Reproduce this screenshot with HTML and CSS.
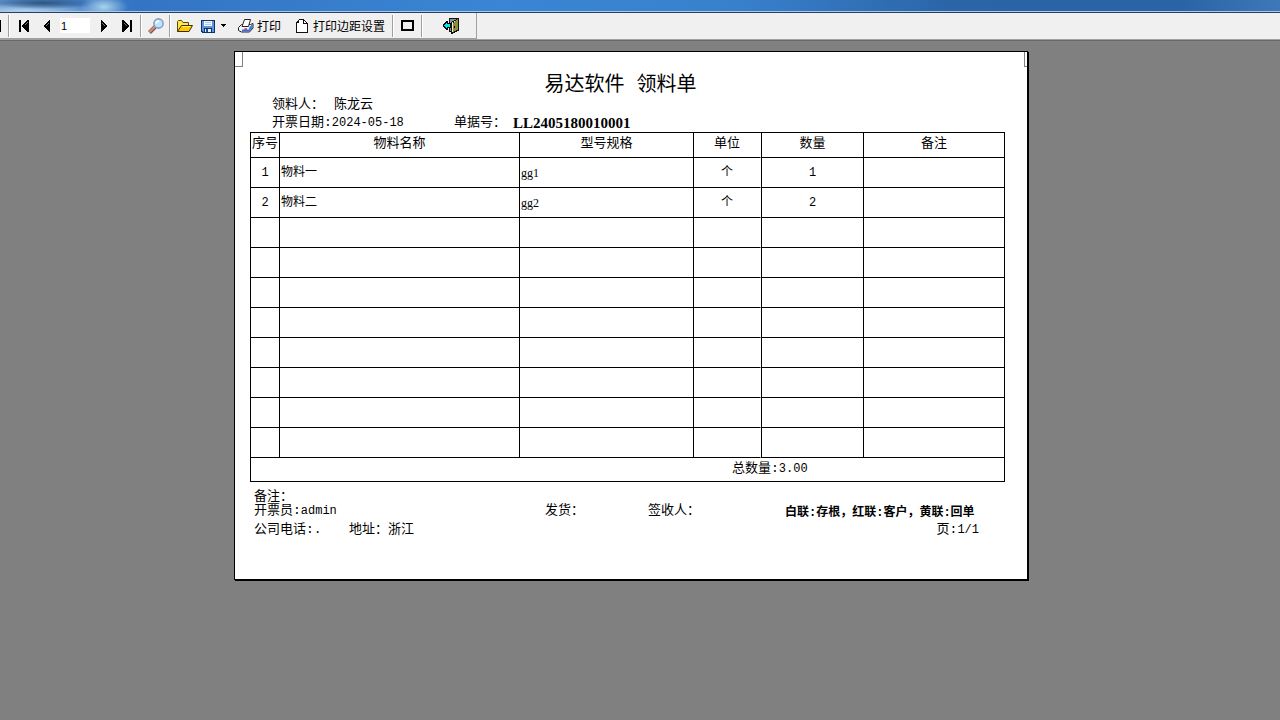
FILE: index.html
```html
<!DOCTYPE html>
<html lang="zh-CN">
<head>
  <meta charset="UTF-8" />
  <meta name="viewport" content="width=device-width, initial-scale=1.0"/>
  <title>领料单</title>
  <link rel="stylesheet" href="styles.css">
</head>
<body>

  <div class="titlebar"></div>

  <div class="toolbar">
    <div class="tools">
      <span class="stub"></span>
      <span class="sep first"></span>
      <button type="button" class="tool" aria-label="首页">
        <svg width="16" height="16" shape-rendering="crispEdges"><path d="M2 2h2v12H2zM12 2v12h-2v-1H9v-1H8v-1H7v-1H6V9H5V7h1V6h1V5h1V4h1V3h1V2z"/><path d="M9 5h1v1H9zM8 6h1v1H8zM10 4h1v1h-1z" fill="#4c78a0"/></svg>
      </button>
      <button type="button" class="tool" aria-label="上一页">
        <svg width="16" height="16" shape-rendering="crispEdges"><path d="M10 2v12H9v-1H8v-1H7v-1H6v-1H5V9H4V7h1V6h1V5h1V4h1V3h1V2z"/><path d="M8 5h1v1H8zM7 6h1v1H7zM6 7h1v1H6z" fill="#4c78a0"/></svg>
      </button>
      <input class="page-no" type="text" value="1" aria-label="页码" />
      <button type="button" class="tool" aria-label="下一页">
        <svg width="16" height="16" shape-rendering="crispEdges"><path d="M5 2h1v1h1v1h1v1h1v1h1v1h1v2h-1v1H9v1H8v1H7v1H6v1H5z"/><path d="M6 5h1v1H6zM7 6h1v1H7zM8 7h1v1H8z" fill="#4c78a0"/></svg>
      </button>
      <button type="button" class="tool" aria-label="末页">
        <svg width="16" height="16" shape-rendering="crispEdges"><path d="M11 2h2v12h-2zM3 2h2v1h1v1h1v1h1v1h1v1h1v2H9v1H8v1H7v1H6v1H5v1H3z"/><path d="M5 5h1v1H5zM6 6h1v1H6zM7 7h1v1H7z" fill="#4c78a0"/></svg>
      </button>
      <span class="sep"></span>
      <button type="button" class="tool" aria-label="缩放">
        <svg width="16" height="16"><path d="M1.500 14.500L7 9" stroke="#5a5a8c" stroke-width="4"/><path d="M1.500 14L7 8.500" stroke="#e88a50" stroke-width="2.400"/><circle cx="10.500" cy="5.500" r="4.600" fill="#bfe6f8" stroke="#8c9ccc" stroke-width="1.600"/><path d="M8 5.500Q8.500 3 11 3" stroke="#fff" stroke-width="1.600" fill="none"/></svg>
      </button>
      <span class="sep"></span>
      <button type="button" class="tool" aria-label="打开">
        <svg width="16" height="16"><path d="M.5 13.500v-10l1-1h3l1.500 2h5.500v3" fill="#ffe84a" stroke="#5c4800"/><path d="M.5 13.500L4.500 7.500h11l-3.500 6z" fill="#ffc800" stroke="#3c3000"/><path d="M5 8.500h8.500" stroke="#fff27a"/></svg>
      </button>
      <button type="button" class="tool" aria-label="保存">
        <svg width="16" height="16" shape-rendering="crispEdges"><path d="M1 2h14v13H2v-1H1z" fill="#10306c"/><path d="M2 3h12v11H3v-1H2z" fill="#5c94e0"/><path d="M4 3h8v5H4z" fill="#f4f8fd"/><path d="M5 4h6v1H5zM5 6h6v1H5z" fill="#b4c8e4"/><path d="M4 10h8v4H4z" fill="#10306c"/><path d="M5 11h6v3H5z" fill="#e8f0f8"/><path d="M6 11h2v3H6z" fill="#204c94"/></svg>
      </button>
      <button type="button" class="tool drop" aria-label="保存选项">
        <svg width="5" height="3" shape-rendering="crispEdges"><path d="M0 0h5v1H4v1H3v1H2V2H1V1H0z"/></svg>
      </button>
      <button type="button" class="tool text">
        <svg width="16" height="16"><path d="M.5 9.500L3.500 6.500h9l2.500-1v4.500l-3.500 4h-8l-3-1.500z" fill="#f3f6fb" stroke="#222"/><path d="M4 8.500L6.500 1.500h6L10.500 8.500z" fill="#fff" stroke="#222"/><path d="M11 13.500V9.500l3.500-3.500v4z" fill="#3c7ce0"/><path d="M4 12.500h7" stroke="#2f6ee0" stroke-width="2"/><path d="M6.500 11H9" stroke="#f02020" stroke-width="1.500"/></svg>
        打印
      </button>
      <button type="button" class="tool text">
        <svg width="16" height="16" shape-rendering="crispEdges"><path d="M5 1h5v1h1v1h1v1h1v1h1v10H2V4h1V3h1V2h1z" fill="#111"/><path d="M5 2h4v4h4v8H3V5h2z" fill="#fff"/><path d="M10 3v2h2V4h-1V3z" fill="#fff"/></svg>
        打印边距设置
      </button>
      <span class="sep last"></span>
      <button type="button" class="tool" aria-label="全屏">
        <svg width="16" height="16" shape-rendering="crispEdges"><path d="M1 2h13v11H1zM3 4v7h9V4z" fill-rule="evenodd"/></svg>
      </button>
      <span class="sep"></span>
      <button type="button" class="tool exit" aria-label="退出">
        <svg width="16" height="16" shape-rendering="crispEdges"><path d="M6 0h10v13h-2v1h-2v1h-2v1H8v-2H6z" fill="#111"/><path d="M7 1h6v1h-2v1H9v1H8v9H7z" fill="#909090"/><path d="M15 1v11h-2v1h-2v1h-1V5h1V4h1V3h1V2h1V1z" fill="#8c8c40"/><path d="M9 4h1v10H9zM11 3h1v1h-1z" fill="#f0f0d0"/><path d="M11 8h1v2h-1z"/><path d="M0 6h1V5h1V4h1V3h2v2h3v5H5v2H3v-1H2v-1H1V9H0z"/><path d="M1 7h1V6h1V5h1v1h3v3H4v1H3V9H2V8H1z" fill="#00e8f8"/></svg>
      </button>
    </div>
  </div>

  <div class="viewer">
    <div class="sheet">
      <span class="mark left"></span>
      <span class="mark right"></span>

      <h1>易达软件 领料单</h1>
      <div class="line">
        <span class="label-user">领料人：</span>
        <span>陈龙云</span>
      </div>
      <div class="line">
        <span class="date">开票日期:<span class="num">2024-05-18</span></span>
        <span class="label-no">单据号：</span>
        <strong>LL2405180010001</strong>
      </div>

      <table>
        <colgroup>
          <col class="c-seq"><col class="c-name"><col class="c-spec"><col class="c-unit"><col class="c-qty"><col class="c-memo">
        </colgroup>
        <thead>
          <tr><th>序号</th><th>物料名称</th><th>型号规格</th><th class="unit">单位</th><th>数量</th><th>备注</th></tr>
        </thead>
        <tbody>
          <tr><td>1</td><td class="l">物料一</td><td class="l spec">gg1</td><td class="unit">个</td><td>1</td><td></td></tr>
          <tr><td>2</td><td class="l">物料二</td><td class="l spec">gg2</td><td class="unit">个</td><td>2</td><td></td></tr>
          <tr><td></td><td></td><td></td><td class="unit"></td><td></td><td></td></tr>
          <tr><td></td><td></td><td></td><td class="unit"></td><td></td><td></td></tr>
          <tr><td></td><td></td><td></td><td class="unit"></td><td></td><td></td></tr>
          <tr><td></td><td></td><td></td><td class="unit"></td><td></td><td></td></tr>
          <tr><td></td><td></td><td></td><td class="unit"></td><td></td><td></td></tr>
          <tr><td></td><td></td><td></td><td class="unit"></td><td></td><td></td></tr>
          <tr><td></td><td></td><td></td><td class="unit"></td><td></td><td></td></tr>
          <tr><td></td><td></td><td></td><td class="unit"></td><td></td><td></td></tr>
        </tbody>
        <tfoot>
          <tr><td colspan="3"></td><td colspan="3" class="total">总数量:<span class="num">3.00</span></td></tr>
        </tfoot>
      </table>

      <div class="foot">
        <div class="row">备注：</div>
        <div class="row">
          <span class="maker">开票员:<span class="num">admin</span></span>
          <span class="sender">发货：</span>
          <span class="signer">签收人：</span>
          <b>白联:存根，红联:客户，黄联:回单</b>
        </div>
        <div class="row contact">
          <span class="phone">公司电话:.</span>
          <span>地址：浙江</span>
          <span class="page">页:<span class="num">1/1</span></span>
        </div>
      </div>
    </div>
  </div>

</body>
</html>
```
FILE: styles.css
```css
* {
  box-sizing: border-box;
}

body {
  margin: 0;
  min-height: 100vh;
  background: #808080;
  color: #000;
  font-family: "Liberation Mono", "Noto Sans CJK SC", monospace;
  font-size: 13px;
}

.titlebar {
  height: 13px;
  border-bottom: 1px solid #27405f;
  box-shadow: inset 0 -1px 0 #a9c8ea;
  background:
    radial-gradient(ellipse 50px 6px at 44px 3px, #2d5680, transparent),
    radial-gradient(ellipse 24px 12px at 104px 7px, #a9d2ec, transparent),
    radial-gradient(ellipse 80px 8px at 24px 11px, #b4d4ee, transparent),
    linear-gradient(90deg, #5a8cc4 0, #3474c4 140px, #3a86d4 500px, #3880cc 740px, #2b65a8 950px, #2a64a6 1180px, #3f78b8 100%);
}

/* barra */
.toolbar {
  height: 28px;
  background: #f0f0f0;
  border-bottom: 1px solid #696969;
  box-shadow: inset 0 -1px 0 #a0a0a0;
}

.tools {
  display: flex;
  align-items: center;
  width: max-content;
  height: 26px;
  border-right: 1px solid #a0a0a0;
  border-bottom: 1px solid #a0a0a0;
}

.stub {
  width: 1px;
  height: 12px;
  background: #000;
}

.sep {
  width: 2px;
  height: 22px;
  margin: 0 2px;
  border-left: 1px solid #a0a0a0;
  border-right: 1px solid #fff;
}

.sep.first {
  margin: 0 3px 0 7px;
}

.sep.last {
  margin-left: 4px;
}

.tool {
  display: flex;
  align-items: center;
  justify-content: center;
  width: 23px;
  height: 22px;
  padding: 0;
  border: none;
  background: none;
  color: #000;
  font-family: "Noto Sans CJK SC", sans-serif;
  font-size: 12px;
  line-height: 22px;
}

.tool svg {
  flex: none;
}

.tool.drop {
  width: 9px;
}

.tool.text {
  width: auto;
  margin-left: 7px;
  padding: 0 3px;
  gap: 3px;
}

.tool.exit {
  width: 51px;
}

.page-no {
  width: 30px;
  height: 15px;
  margin: 0 2px 0 1px;
  padding: 0 1px;
  border: none;
  background: #fff;
  font-family: "Liberation Sans", sans-serif;
  font-size: 11px;
}

/* folha */
.viewer {
  padding: 10px 18px 10px 0;
}

.sheet {
  position: relative;
  max-width: 794px;
  margin: auto;
  padding: 24px 22px 40px 15px;
  background: #fff;
  border: 1px solid #000;
  box-shadow: 1px 1px 0 #000;
}

.mark {
  position: absolute;
  top: 0;
  height: 15px;
  border-bottom: 1px solid #808080;
}

.mark.left {
  left: 0;
  width: 8px;
  border-right: 1px solid #808080;
}

.mark.right {
  right: 0;
  width: 3px;
  border-left: 1px solid #808080;
}

h1 {
  margin: 0;
  padding-right: 14px;
  font-size: 20px;
  font-weight: normal;
  line-height: 20px;
  text-align: center;
}

.line {
  display: flex;
  padding-left: 22px;
  line-height: 18px;
  height: 18px;
}

.num {
  font-size: 12px;
}

.label-user {
  width: 62px;
}

.date {
  width: 182px;
}

.label-no {
  width: 59px;
}

.line strong {
  font-family: "Liberation Serif", serif;
  font-size: 15px;
}

table {
  width: 100%;
  table-layout: fixed;
  border-spacing: 0;
  border-top: 1px solid #000;
  border-left: 1px solid #000;
}

.c-seq { width: 29px; }
.c-spec { width: 174px; }
.c-unit { width: 67px; }
.c-qty { width: 103px; }
.c-memo { width: 141px; }

th, td {
  height: 30px;
  padding: 0;
  border-right: 1px solid #000;
  border-bottom: 1px solid #000;
  font-size: 12px;
  line-height: 20px;
  text-align: center;
}

th {
  height: 25px;
  padding-bottom: 2px;
  font-size: 13px;
  font-weight: normal;
}

/* linha dupla entre unidade e quantidade */
.unit {
  border-right-color: #fff;
}

.unit + th,
.unit + td {
  border-left: 1px solid #000;
}

td.l {
  padding-left: 1px;
  text-align: left;
}

td.spec {
  font-family: "Liberation Serif", serif;
}

tfoot td {
  height: 24px;
  border-right: none;
}

tfoot .total {
  padding: 0 0 2px 38px;
  border-right: 1px solid #000;
  font-size: 13px;
  text-align: left;
}

.foot {
  padding: 8px 0 0 4px;
}

.row {
  display: flex;
  height: 14px;
  line-height: 14px;
}

.maker {
  width: 291px;
}

.sender {
  width: 103px;
}

.signer {
  width: 137px;
}

.row b {
  font-size: 12px;
  line-height: 18px;
  white-space: nowrap;
}

.contact {
  height: 18px;
  margin-top: 3px;
  line-height: 18px;
}

.phone {
  width: 95px;
}

.page {
  margin-left: auto;
  padding-right: 26px;
}
```
